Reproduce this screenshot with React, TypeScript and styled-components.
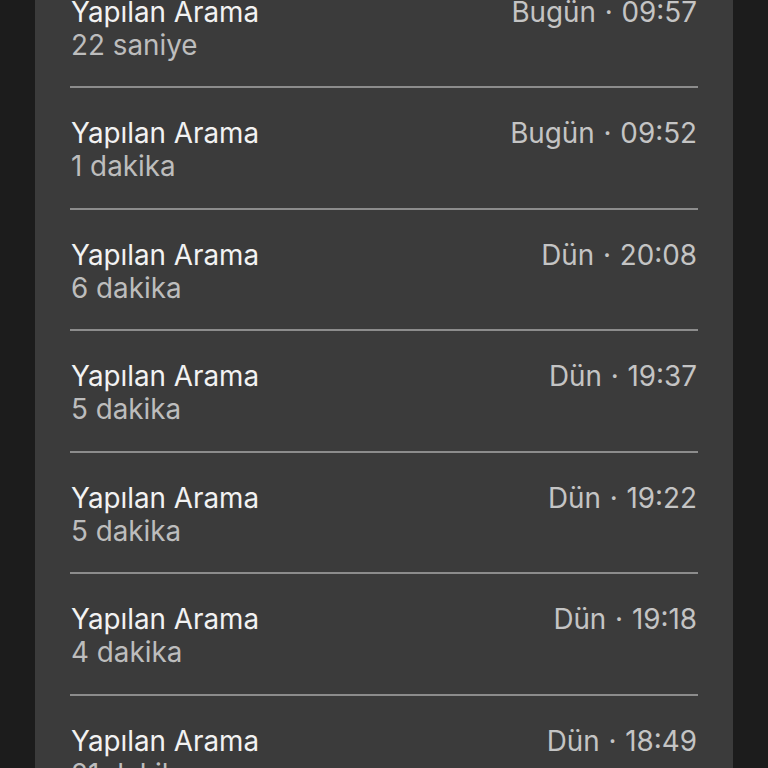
import React from "react";
import styled, { createGlobalStyle } from "styled-components";

const Global = createGlobalStyle`
  html, body { margin: 0; padding: 0; background: #1c1c1c; overflow: hidden; }
  body { font-family: Inter, "Noto Sans", sans-serif; -webkit-font-smoothing: antialiased; }
`;

const Page = styled.div`
  width: 768px;
  height: 768px;
  background: #1c1c1c;
  display: flex;
  justify-content: center;
  overflow: hidden;
`;

const Panel = styled.div`
  width: 628px;
  padding: 0 35px 0 35px;
  background: #3b3b3b;
  height: 100%;
`;

const List = styled.div`
  margin-top: -33.5px;
  display: flex;
  flex-direction: column;
`;

const Row = styled.div`
  display: flex;
  justify-content: space-between;
  align-items: flex-start;
  padding: 29px 0 24.5px 0;
  border-bottom: 2px solid #8c8c8c;
`;

const Left = styled.div`
  display: flex;
  flex-direction: column;
  padding-left: 1px;
`;

const Title = styled.div`
  font-size: 27.8px;
  line-height: 33px;
  color: #f2f2f2;
  font-weight: 400;
`;

const Sub = styled.div`
  font-size: 27.8px;
  line-height: 33px;
  color: #bdbdbd;
`;

const Time = styled.div`
  font-size: 27.8px;
  line-height: 33px;
  color: #c4c4c4;
  margin-right: 1px;
  word-spacing: 1px;
`;

const calls = [
  ["22 saniye", "Bugün · 09:57"],
  ["1 dakika", "Bugün · 09:52"],
  ["6 dakika", "Dün · 20:08"],
  ["5 dakika", "Dün · 19:37"],
  ["5 dakika", "Dün · 19:22"],
  ["4 dakika", "Dün · 19:18"],
  ["21 dakika", "Dün · 18:49"],
];

export default function App() {
  return (
    <Page>
      <Global />
      <Panel>
        <List>
          {calls.map(([d, t], i) => (
            <Row key={i}>
              <Left>
                <Title>Yapılan Arama</Title>
                <Sub>{d}</Sub>
              </Left>
              <Time>{t}</Time>
            </Row>
          ))}
        </List>
      </Panel>
    </Page>
  );
}
